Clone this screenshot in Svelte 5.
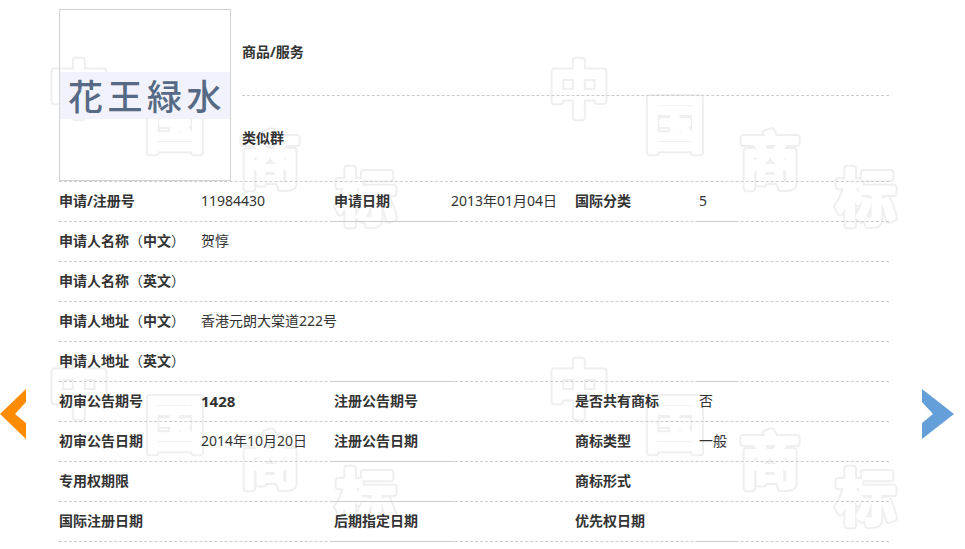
<script lang="ts">
  const marks = [
    { ch: '中', x: 79, y: 90 },
    { ch: '国', x: 175, y: 125 },
    { ch: '商', x: 270, y: 161 },
    { ch: '标', x: 366, y: 198 },
  ]
  const offsets = [[0, 0], [500, 0], [0, 300], [500, 300]]
  const watermark = offsets.flatMap(([dx, dy]) =>
    marks.map(m => ({ ch: m.ch, x: m.x + dx, y: m.y + dy }))
  )

  type Row = { cells: string[], mid?: boolean, end?: boolean, strong?: number }

  const rows: Row[] = [
    { cells: ['申请/注册号', '11984430', '申请日期', '2013年01月04日', '国际分类', '5'], mid: true, end: true },
    { cells: ['申请人名称（中文）', '贺惇'] },
    { cells: ['申请人名称（英文）', ''] },
    { cells: ['申请人地址（中文）', '香港元朗大棠道222号'] },
    { cells: ['申请人地址（英文）', ''], mid: true, end: true },
    { cells: ['初审公告期号', '1428', '注册公告期号', '', '是否共有商标', '否'], strong: 1 },
    { cells: ['初审公告日期', '2014年10月20日', '注册公告日期', '', '商标类型', '一般'], mid: true },
    { cells: ['专用权期限', '', '', '', '商标形式', ''], mid: true },
    { cells: ['国际注册日期', '', '后期指定日期', '', '优先权日期', ''], mid: true, end: true },
  ]

  // parens sit in the middle of their em box in the TC font
  function parts(s: string) {
    return s.split(/([（）])/).filter(Boolean)
  }
</script>

<svg class="watermark" width="965" height="549" aria-hidden="true">
  {#each watermark as m}
    <text class="markOuter" x={m.x} y={m.y + 22} text-anchor="middle">{m.ch}</text>
  {/each}
  {#each watermark as m}
    <text class="markInner" x={m.x} y={m.y + 22} text-anchor="middle">{m.ch}</text>
  {/each}
</svg>

<div class="detail">
  <div class="top">
    <div class="logo">
      <div class="logoBand">花王緑水</div>
    </div>
    <div class="topInfo">
      <div class="topRow">商品/服务</div>
      <div class="topRow">类似群</div>
    </div>
  </div>

  {#each rows as row}
    <div class="row" class:mid={row.mid} class:end={row.end}>
      {#if row.cells.length === 2}
        <div class="label">
          {#each parts(row.cells[0]) as p}
            {#if p === '（' || p === '）'}<span class="paren">{p}</span>{:else}{p}{/if}
          {/each}
        </div>
        <div class="value wide">{row.cells[1]}</div>
      {:else}
        {#each row.cells as cell, i}
          <div class={i % 2 === 0 ? 'label' : 'value'} class:strong={row.strong === i}>{cell}</div>
        {/each}
      {/if}
    </div>
  {/each}
</div>

<svg class="arrow prev" width="26" height="50" viewBox="0 0 26 50" aria-hidden="true">
  <polygon points="26,0 26,13 15,25 26,34 26,50 0,25" fill="#ff8c00" />
</svg>
<svg class="arrow next" width="32" height="50" viewBox="0 0 32 50" aria-hidden="true">
  <polygon points="0,0 32,25 0,50 0,34 11,25 0,13" fill="#659fd9" />
</svg>

<style>
  :global(body) {
    background: #fff;
    overflow: hidden;
  }
  .watermark {
    position: absolute;
    top: 0;
    left: 0;
  }
  .watermark text {
    font-family: "Noto Sans CJK SC", sans-serif;
    font-size: 60px;
    font-weight: 500;
    stroke-linejoin: round;
    stroke-linecap: round;
  }
  .markOuter {
    fill: #efefef;
    stroke: #efefef;
    stroke-width: 8px;
  }
  .markInner {
    fill: #fff;
    stroke: #fff;
    stroke-width: 4px;
  }
  .detail {
    position: relative;
    width: 830px;
    margin-left: 59px;
    padding-top: 9px;
    color: #333;
    font-family: "Noto Sans", "Noto Sans CJK SC", sans-serif;
    font-size: 14px;
  }
  .top {
    display: flex;
    height: 173px;
    box-sizing: border-box;
    border-bottom: 1px dashed #ccc;
  }
  .logo {
    display: flex;
    align-items: center;
    box-sizing: border-box;
    width: 172px;
    height: 172px;
    border: 1px solid #d2d2d2;
  }
  .logoBand {
    width: 100%;
    height: 47px;
    margin-top: 1px;
    background: #f1f2fb;
    color: #566a85;
    font-family: "Noto Sans CJK JP", sans-serif;
    font-size: 35px;
    font-weight: 500;
    line-height: 46px;
    letter-spacing: 4.5px;
    padding-left: 8px;
    box-sizing: border-box;
    white-space: nowrap;
  }
  .topInfo {
    flex: 1;
    margin-left: 11px;
  }
  .topRow {
    box-sizing: border-box;
    display: flex;
    align-items: center;
    height: 87px;
    padding-bottom: 2px;
    font-weight: 700;
  }
  .topRow:first-child {
    border-bottom: 1px dashed #ccc;
  }
  .topRow:last-child {
    height: 85px;
    padding-bottom: 3px;
  }
  .row {
    position: relative;
    display: grid;
    grid-template-columns: 142px 133px 117px 124px 124px 1fr;
    box-sizing: border-box;
    height: 40px;
    line-height: 38px;
    border-bottom: 1px dashed #ccc;
    white-space: nowrap;
  }
  .row.mid::before {
    content: "";
    position: absolute;
    left: 272px;
    bottom: -1px;
    width: 123px;
    height: 1px;
    background: #ccc;
  }
  .row.end::after {
    content: "";
    position: absolute;
    left: 637px;
    bottom: -1px;
    width: 40px;
    height: 1px;
    background: #ccc;
  }
  .label {
    font-weight: 700;
  }
  .paren {
    font-family: "Noto Sans CJK TC", sans-serif;
    font-weight: 400;
    line-height: 1;
  }
  .value.wide {
    grid-column: 2 / -1;
  }
  .value.strong {
    font-weight: 700;
    font-size: 15px;
  }
  .arrow {
    position: absolute;
    top: 389px;
  }
  .prev {
    left: 0;
  }
  .next {
    left: 922px;
  }
</style>
